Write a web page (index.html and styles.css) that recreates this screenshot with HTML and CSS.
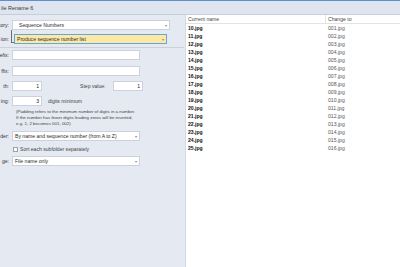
FILE: index.html
```html
<!DOCTYPE html>
<html lang="en">
<head>
<meta charset="UTF-8" />
<title>File Rename 6</title>
<link rel="stylesheet" href="styles.css">
</head>
<body>
<div class="titlebar"><span class="title">ile Rename 6</span></div>
<div class="main">
<div class="left">
<div class="row">
<span class="label">tory:</span>
<div class="select wide">Sequence Numbers<span class="arrow">&#9662;</span></div>
</div>
<div class="row sub-row">
<span class="label">ion:</span>
<span class="connector"></span>
<div class="select action">Produce sequence number list<span class="arrow">&#9662;</span></div>
</div>
<div class="separator"></div>
<div class="row prefix-row">
<span class="label">efix:</span>
<div class="input long"></div>
</div>
<div class="row gap6">
<span class="label">ffix:</span>
<div class="input long"></div>
</div>
<div class="row gap5">
<span class="label">th:</span>
<div class="input num">1</div>
<span class="step-label">Step value:</span>
<div class="input num">1</div>
</div>
<div class="row gap5">
<span class="label">ing:</span>
<div class="input num">3</div>
<span class="hint">digits minimum</span>
</div>
<p class="note">
(Padding refers to the minimum number of digits in a number.<br>
If the number has fewer digits leading zeros will be inserted,<br>
e.g. 1, 2 becomes 001, 002)
</p>
<div class="row order-row">
<span class="label">der:</span>
<div class="select mid">By name and sequence number (from A to Z)<span class="arrow">&#9662;</span></div>
</div>
<div class="check-row">
<span class="checkbox"></span>
<span>Sort each subfolder separately</span>
</div>
<div class="row change-row">
<span class="label">ge:</span>
<div class="select mid">File name only<span class="arrow">&#9662;</span></div>
</div>
</div>
<div class="right">
<div class="list-head">
<div class="col-name">Current name</div>
<div class="col-new">Change to</div>
</div>
<ul class="file-list" id="files"></ul>
</div>
</div>
<script>
const list = document.getElementById("files");
for (let i = 0; i < 16; i++) {
const li = document.createElement("li");
const num = String(i + 1).padStart(3, "0");
li.innerHTML = `<span class="col-name">${10 + i}.jpg</span><span class="col-new">${num}.jpg</span>`;
list.appendChild(li);
}
</script>
</body>
</html>
```

FILE: styles.css
```css
* {
margin: 0;
padding: 0;
box-sizing: border-box;
}
body {
width: 400px;
height: 267px;
overflow: hidden;
background: #fff;
font-family: "Liberation Sans", Arial, sans-serif;
font-size: 5.1px;
color: #2b2b2b;
}
.titlebar {
height: 15px;
border-top: 1px solid #5b8fcf;
border-bottom: 1px solid #c6cedb;
background: #dfe5ef;
display: flex;
align-items: center;
padding-left: 1px;
font-size: 5.5px;
color: #3a3a3a;
}
.main {
display: flex;
height: 252px;
}
.left {
width: 186px;
background: #e5e9f2;
border-right: 1px solid #d3d9e3;
padding-top: 5px;
}
.right {
flex: 1;
background: #fff;
}
.row {
display: flex;
align-items: center;
height: 10px;
}
.label {
width: 9px;
margin-right: 3px;
display: flex;
justify-content: flex-end;
white-space: nowrap;
color: #333;
}
.select, .input {
height: 10px;
background: #fff;
border: 1px solid #cbd2de;
display: flex;
align-items: center;
padding: 0 2px;
white-space: nowrap;
}
.select {
justify-content: space-between;
}
.arrow {
color: #8a8a8a;
font-size: 4px;
}
.wide {
width: 158px;
padding-left: 6px;
}
.sub-row {
height: 14px;
align-items: flex-end;
}
.sub-row .label {
height: 10px;
align-items: center;
margin-right: 2px;
}
.connector {
width: 3px;
height: 13px;
border-left: 1px solid #6d6d6d;
border-bottom: 1px solid #6d6d6d;
margin-bottom: 1px;
}
.action {
width: 153px;
background: #fde8a4;
border-color: #62a6dc;
}
.separator {
margin-top: 3px;
border-top: 1px solid #cad1dd;
width: 184px;
}
.prefix-row {
margin-top: 2px;
}
.gap6 {
margin-top: 6px;
}
.gap5 {
margin-top: 5px;
}
.long {
width: 128px;
}
.num {
width: 30px;
justify-content: flex-end;
}
.step-label {
margin-left: 38px;
width: 33px;
color: #444;
}
.hint {
margin-left: 6px;
color: #444;
}
.note {
margin-top: 3px;
padding-left: 16px;
line-height: 6px;
color: #444;
font-size: 4.4px;
}
.order-row {
margin-top: 4px;
}
.mid {
width: 128px;
}
.check-row {
display: flex;
align-items: center;
height: 8px;
margin-top: 4px;
padding-left: 13px;
color: #444;
}
.checkbox {
width: 5px;
height: 5px;
background: #fff;
border: 1px solid #9aa2ad;
margin-right: 2px;
}
.change-row {
margin-top: 3px;
}
.list-head {
display: flex;
height: 9px;
border-bottom: 1px solid #e3e3e3;
align-items: stretch;
color: #444;
}
.list-head .col-name {
border-right: 1px solid #e3e3e3;
}
.col-name {
width: 140px;
padding-left: 2px;
display: flex;
align-items: center;
}
.col-new {
padding-left: 2px;
display: flex;
align-items: center;
}
.file-list {
list-style-type: none;
}
.file-list li {
display: flex;
height: 8px;
}
.file-list .col-name {
font-weight: bold;
color: #111;
}
.file-list .col-new {
color: #555;
}
```
